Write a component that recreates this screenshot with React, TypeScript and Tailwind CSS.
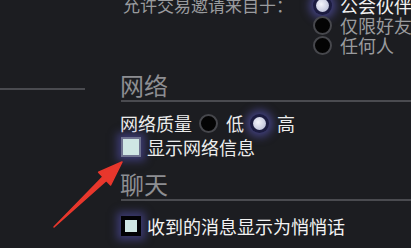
import React from 'react';

const Radio: React.FC<{ on?: boolean }> = ({ on }) =>
  on ? (
    <span className="inline-flex shrink-0 w-[19px] h-[19px] rounded-full bg-[#1c1c40] shadow-[0_0_8px_4px_rgba(96,92,200,0.55)] items-center justify-center">
      <span className="block w-[13px] h-[13px] rounded-full bg-[radial-gradient(circle_at_40%_40%,#f4f5fb,#b0b4d0)]" />
    </span>
  ) : (
    <span className="block shrink-0 w-[19px] h-[19px] rounded-full bg-[#040404] border-[2.5px] border-[#46474c]" />
  );

const Check: React.FC<{ light?: boolean }> = ({ light }) => (
  <span
    className={`inline-flex shrink-0 w-[20px] h-[20px] items-center justify-center shadow-[0_0_8px_4px_rgba(90,86,190,0.5)] ${
      light ? 'bg-[#6f7390] p-[2px]' : 'bg-[#020205] p-[4px]'
    }`}
  >
    <span className="block w-full h-full bg-[#cfe6e4]" />
  </span>
);

export default function App() {
  return (
    <div className="relative w-[411px] h-[248px] overflow-hidden bg-[#1c1d21] font-['Noto_Sans_CJK_SC',sans-serif]">
      <div className="flex -mt-[5px]">
        {/* left panel edge */}
        <div className="w-[120px] shrink-0">
          <div className="mt-[93px] w-[85px] h-[2px] bg-[#4a4b50]" />
        </div>

        <div className="flex-1 min-w-0">
          {/* trade invitations */}
          <div className="flex items-start pl-[3px]">
            <span className="text-[17px] leading-[20px] text-[#9a9b9e] whitespace-nowrap w-[190px] shrink-0">
              允许交易邀请来自于：
            </span>
            <div className="flex flex-col">
              <div className="h-[20px] flex items-center gap-[8px]">
                <Radio on />
                <span className="text-[18px] leading-[20px] text-[#f1f1f1] whitespace-nowrap">公会伙伴</span>
              </div>
              <div className="h-[20px] flex items-center gap-[8px]">
                <Radio />
                <span className="text-[18px] leading-[20px] text-[#9a9b9e] whitespace-nowrap">仅限好友</span>
              </div>
              <div className="h-[20px] flex items-center gap-[8px]">
                <Radio />
                <span className="text-[18px] leading-[20px] text-[#9a9b9e] whitespace-nowrap">任何人</span>
              </div>
            </div>
          </div>

          {/* network */}
          <div className="mt-[15px] text-[24px] leading-[30px] text-[#8d8e92]">网络</div>
          <div className="h-[2px] bg-[#4a4b50] ml-[1px]" />

          <div className="mt-[9px] h-[24px] flex items-center text-[18px] text-[#ededed] whitespace-nowrap">
            <span>网络质量</span>
            <span className="ml-[7px] flex"><Radio /></span>
            <span className="ml-[8px]">低</span>
            <span className="ml-[6px] flex"><Radio on /></span>
            <span className="ml-[8px]">高</span>
          </div>

          <div className="h-[24px] flex items-center gap-[6px] pl-[1px] text-[18px] text-[#ededed] whitespace-nowrap">
            <Check light />
            <span>显示网络信息</span>
          </div>

          {/* chat */}
          <div className="mt-[10px] text-[24px] leading-[30px] text-[#8d8e92]">聊天</div>
          <div className="h-[2px] bg-[#4a4b50] ml-[1px]" />

          <div className="mt-[13px] h-[24px] flex items-center gap-[6px] pl-[1px] text-[18px] text-[#f3f3f3] whitespace-nowrap">
            <Check />
            <span>收到的消息显示为悄悄话</span>
          </div>
        </div>
      </div>

      {/* annotation arrow */}
      <svg className="absolute left-0 top-0 pointer-events-none" width="411" height="248" viewBox="0 0 411 248">
        <polygon
          points="54,227 106.3,180.4 110.6,185 122,162 98.6,172.3 102.9,176.8"
          fill="#e8372c"
          stroke="#e8372c"
          strokeWidth="1.5"
          strokeLinejoin="round"
        />
      </svg>
    </div>
  );
}
